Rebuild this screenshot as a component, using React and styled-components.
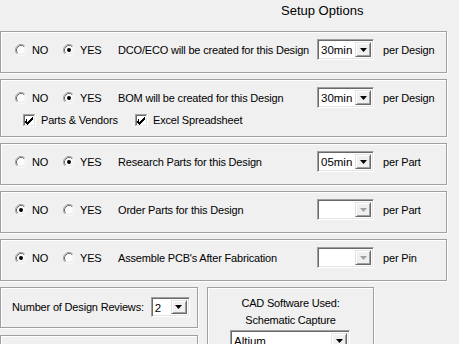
import React from "react";
import styled, { createGlobalStyle } from "styled-components";

const GlobalStyle = createGlobalStyle`
  body {
    margin: 0;
    background: #f0f0f0;
    font-family: "Liberation Sans", Arial, sans-serif;
    font-size: 11px;
    letter-spacing: -0.18px;
    color: #000;
    overflow: hidden;
  }
`;

const Page = styled.div`
  width: 459px;
  height: 344px;
  overflow: hidden;
  background: #f0f0f0;
`;

const Title = styled.div`
  height: 31px;
  padding-left: 281px;
  padding-top: 3px;
  box-sizing: border-box;
  font-size: 13px;
  letter-spacing: 0;
`;

const Stack = styled.div`
  display: flex;
  flex-direction: column;
  gap: 6px;
  width: 447px;
`;

const Panel = styled.div`
  box-sizing: border-box;
  height: ${(p) => p.$h}px;
  border: 1px solid #a0a0a0;
  box-shadow: inset 1px 1px 0 #fff, 1px 1px 0 #fff;
  padding: 7px 0 0 14px;
`;

const Row = styled.div`
  display: flex;
  align-items: center;
  height: 21px;
`;

const Cell = styled.div`
  width: ${(p) => p.$w}px;
  flex: none;
  display: flex;
  align-items: center;
  white-space: nowrap;
`;

const Per = styled.span`
  margin-left: 9px;
  white-space: nowrap;
`;

const CheckRow = styled.div`
  display: flex;
  align-items: center;
  height: 14px;
  margin-top: 5px;
  margin-left: 8px;
`;

const Mark = styled.span`
  display: inline-flex;
  margin-right: ${(p) => p.$gap}px;
`;

const ComboBox = styled.div`
  box-sizing: border-box;
  width: ${(p) => p.$w}px;
  height: ${(p) => p.$h || 21}px;
  flex: none;
  display: flex;
  background: #fff;
  border: 1px solid;
  border-color: #a0a0a0 #fff #fff #a0a0a0;
  box-shadow: inset 1px 1px 0 #696969, inset -1px -1px 0 #e3e3e3;
  padding: 2px;
  font-size: 11.5px;
  letter-spacing: 0;
`;

const ComboText = styled.div`
  flex: 1;
  line-height: 16px;
  padding-left: 1px;
  white-space: nowrap;
  overflow: hidden;
`;

const ComboButton = styled.div`
  box-sizing: border-box;
  width: 16px;
  flex: none;
  display: flex;
  align-items: center;
  justify-content: center;
  background: #f0f0f0;
  border: 1px solid;
  border-color: #e3e3e3 #696969 #696969 #e3e3e3;
  box-shadow: inset 1px 1px 0 #fff, inset -1px -1px 0 #a0a0a0;
`;

const Bottom = styled.div`
  display: flex;
  gap: 9px;
  margin-top: 6px;
  align-items: flex-start;
`;

const LeftCol = styled.div`
  display: flex;
  flex-direction: column;
  gap: 7px;
  width: 198px;
`;

const Box = styled.div`
  box-sizing: border-box;
  width: ${(p) => p.$w}px;
  height: ${(p) => p.$h}px;
  border: 1px solid #a0a0a0;
  box-shadow: inset 1px 1px 0 #fff, 1px 1px 0 #fff;
`;

const ReviewRow = styled.div`
  display: flex;
  align-items: center;
  height: 20px;
  margin: 9px 0 0 11px;
  gap: 7px;
`;

const CadBox = styled(Box)`
  display: flex;
  flex-direction: column;
  align-items: center;
  padding-top: 7px;
  line-height: 17px;
`;

const CadCombo = styled.div`
  margin-top: 1px;
  margin-left: -1px;
`;

const Radio = ({ checked }) => (
  <Mark $gap={5}>
    <svg width="12" height="12" viewBox="0 0 12 12">
      <circle cx="6" cy="6" r="5" fill="#fff" />
      <path d="M2.11 9.89 A5.5 5.5 0 0 1 9.89 2.11" fill="none" stroke="#a0a0a0" />
      <path d="M9.89 2.11 A5.5 5.5 0 0 1 2.11 9.89" fill="none" stroke="#fff" />
      <path d="M2.82 9.18 A4.5 4.5 0 0 1 9.18 2.82" fill="none" stroke="#696969" />
      <path d="M9.18 2.82 A4.5 4.5 0 0 1 2.82 9.18" fill="none" stroke="#e3e3e3" />
      {checked && <circle cx="6" cy="6" r="2" fill="#000" />}
    </svg>
  </Mark>
);

const Check = () => (
  <Mark $gap={5}>
    <svg width="13" height="13" viewBox="0 0 13 13" shapeRendering="crispEdges">
      <rect x="0" y="0" width="13" height="13" fill="#fff" />
      <path d="M0.5 12 V0.5 H12" fill="none" stroke="#a0a0a0" />
      <path d="M1.5 11 V1.5 H11" fill="none" stroke="#696969" />
      <path d="M0 12.5 H12.5 V0" fill="none" stroke="#fff" />
      <path d="M1 11.5 H11.5 V1" fill="none" stroke="#e3e3e3" />
      <path d="M3 5h1v3h1v-1h1v-1h1v-1h1v-1h1v-1h1v3h-1v1h-1v1h-1v1h-1v1h-1v1h-1v-1h-1v-1h-1z" fill="#000" />
    </svg>
  </Mark>
);

const Combo = ({ value, w, h, disabled }) => (
  <ComboBox $w={w} $h={h}>
    <ComboText>{value}</ComboText>
    <ComboButton>
      <svg width="7" height="4" viewBox="0 0 7 4">
        <path d="M0 0h7L3.5 4z" fill={disabled ? "#a0a0a0" : "#000"} />
      </svg>
    </ComboButton>
  </ComboBox>
);

const OptionRow = ({ yes, text, value, per }) => (
  <Row>
    <Cell $w={48}>
      <Radio checked={!yes} />
      NO
    </Cell>
    <Cell $w={55}>
      <Radio checked={yes} />
      YES
    </Cell>
    <Cell $w={199}>{text}</Cell>
    <Combo value={value} w={57} disabled={!value} />
    <Per>{per}</Per>
  </Row>
);

export default function App() {
  return (
    <Page>
      <GlobalStyle />
      <Title>Setup Options</Title>
      <Stack>
        <Panel $h={42}>
          <OptionRow yes text="DCO/ECO will be created for this Design" value="30min" per="per Design" />
        </Panel>
        <Panel $h={58}>
          <OptionRow yes text="BOM will be created for this Design" value="30min" per="per Design" />
          <CheckRow>
            <Cell $w={112}>
              <Check />
              Parts &amp; Vendors
            </Cell>
            <Cell $w={120}>
              <Check />
              Excel Spreadsheet
            </Cell>
          </CheckRow>
        </Panel>
        <Panel $h={42}>
          <OptionRow yes text="Research Parts for this Design" value="05min" per="per Part" />
        </Panel>
        <Panel $h={42}>
          <OptionRow text="Order Parts for this Design" value="" per="per Part" />
        </Panel>
        <Panel $h={42}>
          <OptionRow text="Assemble PCB's After Fabrication" value="" per="per Pin" />
        </Panel>
      </Stack>
      <Bottom>
        <LeftCol>
          <Box $w={198} $h={41}>
            <ReviewRow>
              <span>Number of Design Reviews:</span>
              <Combo value="2" w={39} h={20} />
            </ReviewRow>
          </Box>
          <Box $w={198} $h={30} />
        </LeftCol>
        <CadBox $w={167} $h={70}>
          <div>CAD Software Used:</div>
          <div>Schematic Capture</div>
          <CadCombo>
            <Combo value="Altium" w={120} />
          </CadCombo>
        </CadBox>
      </Bottom>
    </Page>
  );
}
